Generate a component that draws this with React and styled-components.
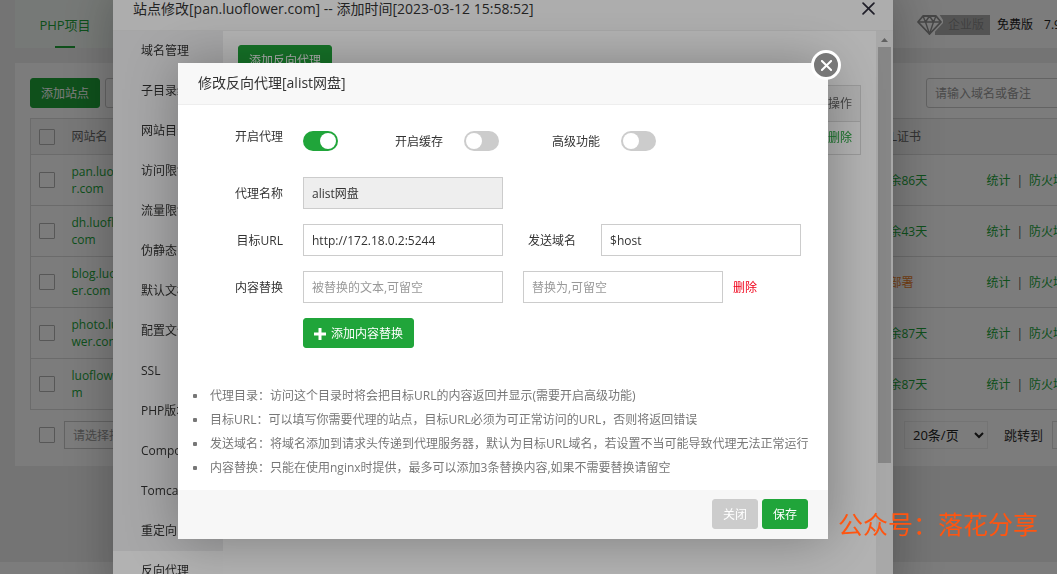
import React, { useState } from "react";
import styled, { createGlobalStyle } from "styled-components";

const GREEN = "#20a53a";

const GlobalStyle = createGlobalStyle`
	* {
		box-sizing: border-box;
	}
	body {
		margin: 0;
		overflow: hidden;
		background: #f0f0f0;
		color: #333;
		font-family: "Open Sans", "Noto Sans CJK SC", sans-serif;
		font-size: 12px;
		line-height: 18px;
	}
	button, input, select {
		font: inherit;
	}
	a {
		color: ${GREEN};
		text-decoration: none;
	}
	table {
		border-collapse: collapse;
	}
`;

/* shared controls */

const Button = styled.button`
	height: 30px;
	padding: 2px 10px 0;
	border: 1px solid ${(p) => (p.$muted ? "#ccc" : GREEN)};
	border-radius: 3px;
	background: ${(p) => (p.$muted ? "#ccc" : GREEN)};
	color: #fff;
	line-height: 18px;
	white-space: nowrap;
	cursor: pointer;
`;

const OutlineButton = styled(Button)`
	border-color: #ccc;
	background: #fff;
	color: #555;
`;

const TextInput = styled.input`
	width: 200px;
	height: 32px;
	padding: 0 8px;
	border: 1px solid #ccc;
	background: ${(p) => (p.disabled ? "#eee" : "#fff")};
	color: #333;
	outline: none;
	&::placeholder {
		color: #999;
	}
`;

const CheckBox = styled.input.attrs({ type: "checkbox" })`
	appearance: none;
	display: block;
	width: 16px;
	height: 16px;
	margin: 0;
	border: 1px solid #b4b4b4;
	border-radius: 1px;
`;

/* site list page */

const Page = styled.div`
	display: flex;
	flex-direction: column;
	min-width: 1220px;
	height: 100vh;
`;

const TopBar = styled.header`
	display: flex;
	align-items: stretch;
	justify-content: space-between;
	height: 48px;
	margin: 0 15px;
	background: #fff;
`;

const Tab = styled.a`
	display: flex;
	flex-direction: column;
	justify-content: flex-end;
	align-items: center;
	width: 100px;
	background: #f4faf5;
	font-size: 13px;
	&::after {
		content: "";
		width: 20px;
		height: 2px;
		margin-top: 12px;
		background: ${GREEN};
	}
`;

const Edition = styled.div`
	isolation: isolate;
	display: flex;
	align-items: center;
	width: 288px;
	padding-top: 2px;
	color: #222;
	svg {
		z-index: 1;
	}
`;

const EditionBadge = styled.span`
	width: 55px;
	height: 20px;
	margin: 0 7px 0 -8px;
	padding-right: 6px;
	background: #adadad;
	color: #858585;
	line-height: 20px;
	text-align: right;
`;

const Version = styled.span`
	margin-left: 11px;
`;

const Panel = styled.main`
	margin: 15px 15px 0;
	padding: 15px 15px 17px;
	background: #fff;
`;

const ToolRow = styled.div`
	display: flex;
	gap: 5px;
	margin-bottom: 10px;
`;

const Search = styled(TextInput)`
	width: 264px;
	height: 30px;
	margin-left: auto;
	border-radius: 3px;
`;

const SiteTable = styled.table`
	width: 100%;
	table-layout: fixed;
	border: 1px solid #ddd;
	th,
	td {
		padding: 0 8px;
		border-bottom: 1px solid #ddd;
		text-align: left;
		font-weight: 400;
	}
	th {
		height: 36px;
		background: #f6f6f6;
		color: #666;
	}
	td {
		height: 51px;
		line-height: 17px;
		word-break: break-all;
	}
`;

const Col = styled.col`
	width: ${(p) => p.$w}px;
`;

const SslLink = styled.a`
	color: ${(p) => (p.$warn ? "#f0842c" : GREEN)};
	white-space: nowrap;
`;

const Separator = styled.span`
	margin: 0 6px;
	color: #555;
`;

const PagerRow = styled.div`
	display: flex;
	align-items: center;
	padding-left: 9px;
	margin-top: 11px;
	font-size: 13px;
	gap: 9px;
`;

const Select = styled.select`
	width: ${(p) => p.$w}px;
	height: 28px;
	padding: 0 4px;
	border: 1px solid ${(p) => p.$line};
	background: #fff;
	color: ${(p) => p.$ink};
	font-size: ${(p) => p.$size}px;
`;

const PagerRight = styled.div`
	display: flex;
	align-items: center;
	gap: 9px;
	width: 286px;
	margin-left: auto;
	label {
		margin-left: 7px;
	}
`;

const PageInput = styled(TextInput)`
	width: 50px;
	height: 28px;
	border-color: #ddd;
`;

const Footer = styled.footer`
	height: 12px;
	margin-top: auto;
	background: #fff;
`;

/* layers */

const Layer = styled.div`
	position: fixed;
	inset: 0;
	display: flex;
	align-items: flex-start;
	justify-content: center;
	padding: ${(p) => p.$top}px 51px 0 0;
	background: rgba(0, 0, 0, 0.3);
`;

const Dialog = styled.section`
	position: relative;
	width: ${(p) => p.$w}px;
	background: #fff;
	box-shadow: 1px 1px 50px rgba(0, 0, 0, 0.3);
`;

const SiteDialog = styled(Dialog)`
	display: flex;
	flex-direction: column;
	height: calc(100vh + 40px);
	margin-top: -11px;
`;

const DialogTitle = styled.h2`
	display: flex;
	align-items: center;
	justify-content: space-between;
	height: 42px;
	margin: 0;
	padding: 0 18px 2px 20px;
	border-bottom: 1px solid #eee;
	background: #f8f8f8;
	color: #333;
	font-size: 14px;
	font-weight: 400;
`;

const IconButton = styled.button`
	display: flex;
	padding: 0;
	border: 0;
	background: none;
	color: #2e2d3c;
`;

const SiteBody = styled.div`
	display: flex;
	flex: 1;
`;

const Menu = styled.nav`
	width: 110px;
	background: #f0f0f1;
`;

const MenuItem = styled.a`
	display: block;
	height: 40px;
	padding-left: 28px;
	background: ${(p) => (p.$active ? "#fff" : "transparent")};
	color: #333;
	line-height: 40px;
`;

const SiteContent = styled.div`
	flex: 1;
	padding: 14px 15px 0;
`;

const ProxyTable = styled.table`
	width: 100%;
	margin-top: 10px;
	border: 1px solid #ddd;
	th,
	td {
		height: 33px;
		padding: 0 8px;
		border-bottom: 1px solid #ddd;
		text-align: right;
		font-weight: 400;
	}
	th {
		height: 36px;
		background: #f6f6f6;
		color: #666;
	}
`;

const ScrollTrack = styled.div`
	display: flex;
	flex-direction: column;
	align-items: center;
	width: 17px;
	background: #f1f1f1;
`;

const ScrollArrow = styled.svg`
	flex: none;
	margin: 4px 0 3px;
`;

const ScrollThumb = styled.div`
	width: 13px;
	height: 416px;
	background: #c1c1c1;
`;

const RoundClose = styled.button`
	position: absolute;
	top: -13px;
	right: -13px;
	display: flex;
	align-items: center;
	justify-content: center;
	width: 30px;
	height: 30px;
	padding: 0;
	border: 3px solid #fff;
	border-radius: 50%;
	background: #787878;
	color: #fff;
`;

/* proxy form */

const Form = styled.form`
	display: flex;
	flex-direction: column;
	gap: 15px;
	padding: 23px 0 0;
`;

const Line = styled.div`
	display: flex;
	align-items: center;
	label,
	a {
		padding-top: 2px;
	}
`;

const FieldLabel = styled.label`
	width: 125px;
	padding-right: 20px;
	text-align: right;
`;

const SwitchLine = styled.div`
	display: flex;
	align-items: flex-start;
	height: 34px;
`;

const SideLabel = styled.label`
	margin: 0 25px;
`;

const Switches = styled.div`
	display: grid;
	grid-template-columns: 92px 157px auto;
	padding-top: 3px;
`;

const SwitchCell = styled.div`
	display: flex;
	align-items: center;
	gap: 21px;
	label {
		padding-top: 2px;
	}
`;

const Switch = styled.input.attrs({ type: "checkbox", role: "switch" })`
	appearance: none;
	width: 35px;
	height: 20px;
	margin: 0;
	padding: 2px;
	border-radius: 10px;
	background: #ccc;
	cursor: pointer;
	&::before {
		content: "";
		display: block;
		width: 16px;
		height: 16px;
		border-radius: 50%;
		background: #fff;
	}
	&:checked {
		background: ${GREEN};
	}
	&:checked::before {
		margin-left: auto;
	}
`;

const ReplaceInput = styled(TextInput)`
	margin-left: 20px;
`;

const DeleteLink = styled.a`
	margin-left: 10px;
	color: #f00019;
`;

const AddButton = styled(Button)`
	display: flex;
	align-items: center;
	gap: 5px;
	margin-left: 125px;
`;

const Tips = styled.ul`
	margin: 36px 0 0;
	padding: 0 0 10px 32px;
	color: #777;
	list-style: none;
	line-height: 24px;
	white-space: nowrap;
	li {
		display: flex;
		align-items: center;
	}
	li::before {
		content: "";
		width: 4px;
		height: 4px;
		margin: 0 13px 0 -17px;
		border-radius: 1px;
		background: #777;
	}
`;

const DialogFooter = styled.div`
	display: flex;
	justify-content: flex-end;
	gap: 4px;
	padding: 9px 20px 10px;
	background: #f7f7f7;
`;

const Watermark = styled.div`
	position: fixed;
	right: 19px;
	bottom: 35px;
	color: #ff5510;
	font-size: 25px;
	line-height: 30px;
	white-space: nowrap;
`;

const sites = [
	{ domain: "pan.luoflower.com", ssl: "剩余86天" },
	{ domain: "dh.luoflower.com", ssl: "剩余43天" },
	{ domain: "blog.luoflower.com", ssl: "未部署", warn: true },
	{ domain: "photo.luoflower.com", ssl: "剩余87天" },
	{ domain: "luoflower.com", ssl: "剩余87天" },
];

const menu = [
	"域名管理",
	"子目录绑定",
	"网站目录",
	"访问限制",
	"流量限制",
	"伪静态",
	"默认文档",
	"配置文件",
	"SSL",
	"PHP版本",
	"Composer",
	"Tomcat",
	"重定向",
	"反向代理",
];

const tips = [
	"代理目录：访问这个目录时将会把目标URL的内容返回并显示(需要开启高级功能)",
	"目标URL：可以填写你需要代理的站点，目标URL必须为可正常访问的URL，否则将返回错误",
	"发送域名：将域名添加到请求头传递到代理服务器，默认为目标URL域名，若设置不当可能导致代理无法正常运行",
	"内容替换：只能在使用nginx时提供，最多可以添加3条替换内容,如果不需要替换请留空",
];

const Cross = ({ size, width }) => (
	<svg width={size} height={size} viewBox="0 0 12 12" fill="none" stroke="currentColor" strokeWidth={width} strokeLinecap="round">
		<path d="M1 1L11 11M11 1L1 11" />
	</svg>
);

const Diamond = () => (
	<svg width="26" height="22" viewBox="0 0 26 22" fill="none" stroke="#909090" strokeWidth="1.8" strokeLinejoin="round">
		<path d="M18 0H22L26 6V9L14 22H12Z" fill="#fff" stroke="none" />
		<path d="M6 2H19L24 8L12.5 20L1 8Z" fill="#fff" />
		<path d="M1 8H24M6 2L8.5 8L12.5 20L16.5 8L19 2M8.5 8L12.5 2L16.5 8" strokeWidth="1.4" />
	</svg>
);

const SiteList = () => (
	<Page>
		<TopBar>
			<Tab href="#php">PHP项目</Tab>
			<Edition>
				<Diamond />
				<EditionBadge>企业版</EditionBadge>
				<span>免费版</span>
				<Version>7.9.8</Version>
			</Edition>
		</TopBar>
		<Panel>
			<ToolRow>
				<Button>添加站点</Button>
				<OutlineButton>修改默认页</OutlineButton>
				<Search placeholder="请输入域名或备注" aria-label="搜索" />
			</ToolRow>
			<SiteTable>
				<colgroup>
					<Col $w={33} />
					<Col $w={91} />
					<col />
					<Col $w={109} />
					<Col $w={211} />
				</colgroup>
				<thead>
					<tr>
						<th><CheckBox aria-label="全选" /></th>
						<th>网站名</th>
						<th />
						<th>SSL证书</th>
						<th />
					</tr>
				</thead>
				<tbody>
					{sites.map((site) => (
						<tr key={site.domain}>
							<td><CheckBox aria-label={site.domain} /></td>
							<td><a href="#site">{site.domain}</a></td>
							<td />
							<td><SslLink href="#ssl" $warn={site.warn}>{site.ssl}</SslLink></td>
							<td>
								<a href="#stats">统计</a>
								<Separator>|</Separator>
								<a href="#waf">防火墙</a>
							</td>
						</tr>
					))}
				</tbody>
			</SiteTable>
			<PagerRow>
				<CheckBox aria-label="全选" />
				<Select $w={130} $line="#ccc" $ink="#999" $size={12} aria-label="批量操作">
					<option>请选择批量操作</option>
				</Select>
				<PagerRight>
					<Select $w={84} $line="#eee" $ink="#222" $size={13} aria-label="每页条数">
						<option>20条/页</option>
					</Select>
					<label htmlFor="jump">跳转到</label>
					<PageInput id="jump" />
				</PagerRight>
			</PagerRow>
		</Panel>
		<Footer />
	</Page>
);

const SiteSettings = () => (
	<SiteDialog $w={780} role="dialog">
		<DialogTitle>
			站点修改[pan.luoflower.com] -- 添加时间[2023-03-12 15:58:52]
			<IconButton aria-label="关闭"><Cross size={13} width={1.6} /></IconButton>
		</DialogTitle>
		<SiteBody>
			<Menu>
				{menu.map((name) => (
					<MenuItem key={name} href="#menu" $active={name === "反向代理"}>{name}</MenuItem>
				))}
			</Menu>
			<SiteContent>
				<Button>添加反向代理</Button>
				<ProxyTable>
					<thead>
						<tr><th>操作</th></tr>
					</thead>
					<tbody>
						<tr><td><a href="#delete">删除</a></td></tr>
					</tbody>
				</ProxyTable>
			</SiteContent>
			<ScrollTrack>
				<ScrollArrow width="9" height="9" viewBox="0 0 9 9"><path d="M1 7L4.5 3L8 7Z" fill="#8b8b8b" /></ScrollArrow>
				<ScrollThumb />
			</ScrollTrack>
		</SiteBody>
	</SiteDialog>
);

const ProxyDialog = () => {
	const [form, setForm] = useState({ enabled: true, cache: false, advanced: false, url: "http://172.18.0.2:5244", host: "$host" });
	const toggle = (key) => () => setForm({ ...form, [key]: !form[key] });
	const change = (key) => (e) => setForm({ ...form, [key]: e.target.value });

	return (
		<Dialog $w={650} role="dialog">
			<DialogTitle>修改反向代理[alist网盘]</DialogTitle>
			<RoundClose aria-label="关闭"><Cross size={11} width={2.2} /></RoundClose>
			<Form onSubmit={(e) => e.preventDefault()}>
				<SwitchLine>
					<FieldLabel htmlFor="enabled">开启代理</FieldLabel>
					<Switches>
						<Switch id="enabled" checked={form.enabled} onChange={toggle("enabled")} />
						<SwitchCell>
							<label htmlFor="cache">开启缓存</label>
							<Switch id="cache" checked={form.cache} onChange={toggle("cache")} />
						</SwitchCell>
						<SwitchCell>
							<label htmlFor="advanced">高级功能</label>
							<Switch id="advanced" checked={form.advanced} onChange={toggle("advanced")} />
						</SwitchCell>
					</Switches>
				</SwitchLine>
				<Line>
					<FieldLabel htmlFor="name">代理名称</FieldLabel>
					<TextInput id="name" value="alist网盘" disabled />
				</Line>
				<Line>
					<FieldLabel htmlFor="url">目标URL</FieldLabel>
					<TextInput id="url" value={form.url} onChange={change("url")} />
					<SideLabel htmlFor="host">发送域名</SideLabel>
					<TextInput id="host" value={form.host} onChange={change("host")} />
				</Line>
				<Line>
					<FieldLabel htmlFor="from">内容替换</FieldLabel>
					<TextInput id="from" placeholder="被替换的文本,可留空" />
					<ReplaceInput placeholder="替换为,可留空" aria-label="替换为" />
					<DeleteLink href="#remove">删除</DeleteLink>
				</Line>
				<Line>
					<AddButton type="button">
						<svg width="12" height="12" viewBox="0 0 12 12"><path d="M4.5 0H7.5V4.5H12V7.5H7.5V12H4.5V7.5H0V4.5H4.5Z" fill="#fff" /></svg>
						添加内容替换
					</AddButton>
				</Line>
			</Form>
			<Tips>
				{tips.map((tip) => (
					<li key={tip}>{tip}</li>
				))}
			</Tips>
			<DialogFooter>
				<Button $muted>关闭</Button>
				<Button>保存</Button>
			</DialogFooter>
		</Dialog>
	);
};

export default function App() {
	return (
		<>
			<GlobalStyle />
			<SiteList />
			<Layer $top={0}>
				<SiteSettings />
			</Layer>
			<Layer $top={63}>
				<ProxyDialog />
			</Layer>
			<Watermark>公众号：落花分享</Watermark>
		</>
	);
}
